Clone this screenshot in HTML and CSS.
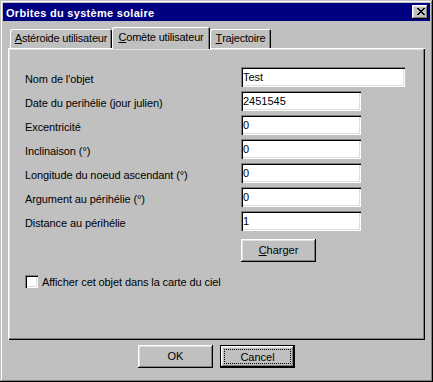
FILE: index.html
```html
<!DOCTYPE html>
<html lang="fr">
<head>
<meta charset="utf-8">
<title>Orbites du système solaire</title>
<link rel="stylesheet" href="styles.css">
</head>
<body>
<div class="window">
  <div class="titlebar">
    <span class="title">Orbites du système solaire</span>
    <span class="close">
      <svg width="8" height="7" viewBox="0 0 8 7" shape-rendering="crispEdges">
        <path d="M0 0h2v1h-2zM6 0h2v1h-2zM1 1h2v1h-2zM5 1h2v1h-2zM2 2h4v1h-4zM3 3h2v1h-2zM2 4h4v1h-4zM1 5h2v1h-2zM5 5h2v1h-2zM0 6h2v1h-2zM6 6h2v1h-2z" fill="#000"/>
      </svg>
    </span>
  </div>
  <div class="client">
    <div class="tabs">
      <div class="tab tab-a"><u>A</u>stéroide utilisateur</div>
      <div class="tab tab-c active"><u>C</u>omète utilisateur</div>
      <div class="tab tab-t"><u>T</u>rajectoire</div>
    </div>
    <div class="panel">
      <div class="form">
        <span class="lbl">Nom de l'objet</span><span class="field wide">Test</span>
        <span class="lbl">Date du perihélie (jour julien)</span><span class="field">2451545</span>
        <span class="lbl">Excentricité</span><span class="field">0</span>
        <span class="lbl">Inclinaison (°)</span><span class="field">0</span>
        <span class="lbl">Longitude du noeud ascendant (°)</span><span class="field">0</span>
        <span class="lbl">Argument au périhélie (°)</span><span class="field">0</span>
        <span class="lbl">Distance au périhélie</span><span class="field">1</span>
      </div>
      <div class="load-row">
        <span class="btn"><u>C</u>harger</span>
      </div>
      <div class="check-row">
        <span class="checkbox"></span>
        <span class="check-label">Afficher cet objet dans la carte du ciel</span>
      </div>
    </div>
    <div class="actions">
      <span class="btn">OK</span>
      <span class="btn default"><span class="focus">Cancel</span></span>
    </div>
  </div>
</div>
</body>
</html>
```

FILE: styles.css
```css
* { box-sizing: border-box; }
html, body { margin: 0; padding: 0; }
body {
  width: 433px;
  height: 382px;
  background: #c0c0c0;
  font-family: "Liberation Sans", Arial, sans-serif;
  font-size: 11px;
  color: #000;
}
.window {
  width: 433px;
  height: 382px;
  padding: 3px;
  background: #c0c0c0;
  box-shadow: inset -1px -1px #000, inset 1px 1px #c0c0c0, inset -2px -2px #808080, inset 2px 2px #fff;
  display: flex;
  flex-direction: column;
}
.titlebar {
  height: 18px;
  background: #000080;
  color: #fff;
  display: flex;
  align-items: center;
  justify-content: space-between;
  padding: 0 2px 0 3px;
}
.title {
  font-weight: bold;
  font-size: 11px;
  letter-spacing: 0.3px;
  padding-top: 1px;
}
.close {
  width: 16px;
  height: 14px;
  background: #c0c0c0;
  box-shadow: inset -1px -1px #000, inset 1px 1px #fff, inset -2px -2px #808080, inset 2px 2px #dfdfdf;
  display: flex;
  align-items: center;
  justify-content: center;
  padding-left: 1px;
  padding-bottom: 1px;
}
.close svg { display: block; }
.client {
  flex: 1;
  padding: 6px 5px 0 5px;
  display: flex;
  flex-direction: column;
}
.tabs {
  height: 21px;
  display: flex;
  align-items: flex-end;
  padding-left: 2px;
  position: relative;
  z-index: 1;
}
.tab {
  height: 19px;
  display: flex;
  align-items: center;
  justify-content: center;
  padding-bottom: 1px;
  letter-spacing: -0.2px;
  border-top-left-radius: 2px;
  border-top-right-radius: 2px;
  box-shadow: inset 1px 1px #fff, inset -1px 0 #000, inset -2px 0 #808080;
  white-space: nowrap;
}
.tab-a { width: 102px; }
.tab-c { width: 98px; }
.tab-t { width: 61px; }
.tab.active {
  height: 22px;
  padding-bottom: 3px;
  margin-bottom: -1px;
  background: #c0c0c0;
  position: relative;
  z-index: 2;
}
.panel {
  width: 417px;
  height: 292px;
  padding: 19px 0 0 17px;
  box-shadow: inset 1px 1px #fff, inset -1px -1px #000, inset -2px -2px #808080, inset 2px 2px #dfdfdf;
}
.form {
  display: grid;
  grid-template-columns: 216px 164px;
  grid-auto-rows: 20px;
  row-gap: 4px;
}
.lbl {
  padding-top: 6px;
  line-height: 13px;
  letter-spacing: -0.1px;
  white-space: nowrap;
}
.field {
  width: 120px;
  height: 20px;
  background: #fff;
  line-height: 18px;
  padding: 1px 2px;
  box-shadow: inset 1px 1px #808080, inset 2px 2px #000, inset -1px -1px #fff, inset -2px -2px #dfdfdf;
}
.field.wide { width: 164px; }
.load-row {
  margin-top: 8px;
  padding-left: 216px;
}
.btn {
  width: 75px;
  height: 23px;
  display: flex;
  align-items: center;
  justify-content: center;
  background: #c0c0c0;
  box-shadow: inset -1px -1px #000, inset 1px 1px #fff, inset -2px -2px #808080, inset 2px 2px #dfdfdf;
  padding-bottom: 1px;
}
.check-row {
  margin-top: 13px;
  display: flex;
  align-items: center;
  gap: 4px;
  height: 13px;
}
.checkbox {
  width: 13px;
  height: 13px;
  background: #fff;
  box-shadow: inset 1px 1px #808080, inset 2px 2px #000, inset -1px -1px #fff, inset -2px -2px #dfdfdf;
}
.check-label { white-space: nowrap; letter-spacing: -0.1px; }
.actions {
  margin-top: 5px;
  display: flex;
  justify-content: center;
  gap: 7px;
}
.btn.default {
  box-shadow: inset 0 0 0 1px #000, inset -2px -2px #000, inset 2px 2px #fff, inset -3px -3px #808080, inset 3px 3px #dfdfdf;
  padding: 4px;
}
.focus {
  flex: 1;
  align-self: stretch;
  display: flex;
  align-items: center;
  justify-content: center;
  outline: 1px dotted #000;
  outline-offset: -1px;
}
```
